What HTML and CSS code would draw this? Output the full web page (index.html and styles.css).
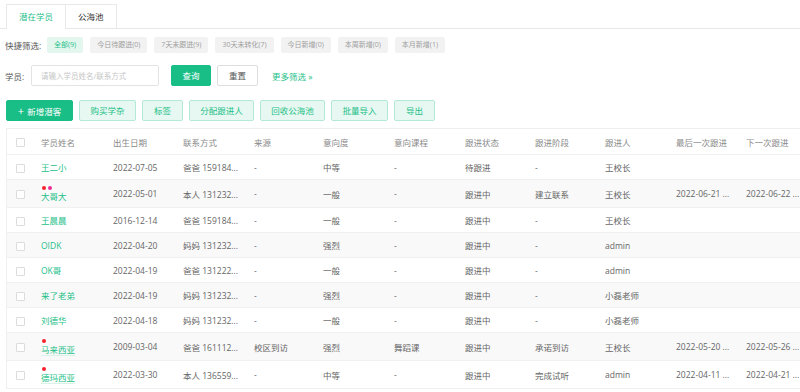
FILE: index.html
```html
<!DOCTYPE html>
<html>

<head>
  <meta charset="UTF-8">
  <meta name="viewport" content="width=device-width, initial-scale=1">
  <title>潜在学员</title>
  <link rel="stylesheet" href="styles.css">
</head>

<body>
  <div class="tabs">
    <div class="tab active">潜在学员</div>
    <div class="tab">公海池</div>
  </div>

  <div class="page">
    <div class="quick">
      <span class="label quick-label">快捷筛选:</span>
      <span class="chip on">全部(9)</span>
      <span class="chip">今日待跟进(0)</span>
      <span class="chip">7天未跟进(9)</span>
      <span class="chip">30天未转化(7)</span>
      <span class="chip">今日新增(0)</span>
      <span class="chip">本周新增(0)</span>
      <span class="chip">本月新增(1)</span>
    </div>

    <div class="search">
      <span class="label search-label">学员:</span>
      <input class="search-input" type="text" placeholder="请输入学员姓名/联系方式">
      <button class="btn primary query">查询</button>
      <button class="btn plain">重置</button>
      <span class="more">更多筛选 &raquo;</span>
    </div>

    <div class="actions">
      <button class="btn primary add"><span class="plus">+</span>新增潜客</button>
      <button class="btn light w4">购买学杂</button>
      <button class="btn light w2">标签</button>
      <button class="btn light w5">分配跟进人</button>
      <button class="btn light w5">回收公海池</button>
      <button class="btn light w4">批量导入</button>
      <button class="btn light w2">导出</button>
    </div>

    <div class="table-wrap">
      <table class="list">
        <colgroup>
          <col class="c-check">
          <col style="width:72px">
          <col style="width:70px">
          <col style="width:71px">
          <col style="width:69px">
          <col style="width:71px">
          <col style="width:71px">
          <col style="width:70px">
          <col style="width:70px">
          <col style="width:71px">
          <col style="width:70px">
          <col style="width:80px">
        </colgroup>
        <thead>
          <tr>
            <th><span class="check"></span></th>
            <th>学员姓名</th>
            <th>出生日期</th>
            <th>联系方式</th>
            <th>来源</th>
            <th>意向度</th>
            <th>意向课程</th>
            <th>跟进状态</th>
            <th>跟进阶段</th>
            <th>跟进人</th>
            <th>最后一次跟进</th>
            <th>下一次跟进</th>
          </tr>
        </thead>
        <tbody>
          <tr>
            <td><span class="check"></span></td>
            <td class="name">王二小</td>
            <td>2022-07-05</td>
            <td>爸爸 159184...</td>
            <td>-</td>
            <td>中等</td>
            <td>-</td>
            <td>待跟进</td>
            <td>-</td>
            <td>王校长</td>
            <td></td>
            <td></td>
          </tr>
          <tr class="tall">
            <td><span class="check"></span></td>
            <td class="name">
              <div class="dots"><i class="dot red"></i><i class="dot pink"></i></div>
              大哥大
            </td>
            <td>2022-05-01</td>
            <td>本人 131232...</td>
            <td>-</td>
            <td>一般</td>
            <td>-</td>
            <td>跟进中</td>
            <td>建立联系</td>
            <td>王校长</td>
            <td>2022-06-21 ...</td>
            <td>2022-06-22 ...</td>
          </tr>
          <tr>
            <td><span class="check"></span></td>
            <td class="name">王晨晨</td>
            <td>2016-12-14</td>
            <td>爸爸 159184...</td>
            <td>-</td>
            <td>一般</td>
            <td>-</td>
            <td>跟进中</td>
            <td>-</td>
            <td>王校长</td>
            <td></td>
            <td></td>
          </tr>
          <tr>
            <td><span class="check"></span></td>
            <td class="name">OIDK</td>
            <td>2022-04-20</td>
            <td>妈妈 131232...</td>
            <td>-</td>
            <td>强烈</td>
            <td>-</td>
            <td>跟进中</td>
            <td>-</td>
            <td>admin</td>
            <td></td>
            <td></td>
          </tr>
          <tr>
            <td><span class="check"></span></td>
            <td class="name">OK哥</td>
            <td>2022-04-19</td>
            <td>爸爸 131222...</td>
            <td>-</td>
            <td>一般</td>
            <td>-</td>
            <td>跟进中</td>
            <td>-</td>
            <td>admin</td>
            <td></td>
            <td></td>
          </tr>
          <tr>
            <td><span class="check"></span></td>
            <td class="name">来了老弟</td>
            <td>2022-04-19</td>
            <td>妈妈 131232...</td>
            <td>-</td>
            <td>强烈</td>
            <td>-</td>
            <td>跟进中</td>
            <td>-</td>
            <td>小磊老师</td>
            <td></td>
            <td></td>
          </tr>
          <tr>
            <td><span class="check"></span></td>
            <td class="name">刘德华</td>
            <td>2022-04-18</td>
            <td>妈妈 131232...</td>
            <td>-</td>
            <td>一般</td>
            <td>-</td>
            <td>跟进中</td>
            <td>-</td>
            <td>小磊老师</td>
            <td></td>
            <td></td>
          </tr>
          <tr class="tall">
            <td><span class="check"></span></td>
            <td class="name">
              <div class="dots"><i class="dot red"></i></div>
              <span class="line">马来西亚</span>
            </td>
            <td>2009-03-04</td>
            <td>爸爸 161112...</td>
            <td>校区到访</td>
            <td>强烈</td>
            <td>舞蹈课</td>
            <td>跟进中</td>
            <td>承诺到访</td>
            <td>王校长</td>
            <td>2022-05-20 ...</td>
            <td>2022-05-26 ...</td>
          </tr>
          <tr class="tall">
            <td><span class="check"></span></td>
            <td class="name">
              <div class="dots"><i class="dot red"></i></div>
              <span class="line">德玛西亚</span>
            </td>
            <td>2022-03-30</td>
            <td>本人 136559...</td>
            <td>-</td>
            <td>中等</td>
            <td>-</td>
            <td>跟进中</td>
            <td>完成试听</td>
            <td>admin</td>
            <td>2022-04-11 ...</td>
            <td>2022-04-21 ...</td>
          </tr>
        </tbody>
      </table>
    </div>
  </div>
</body>

</html>
```

FILE: styles.css
```css
body {
  margin: 0;
  background-color: #fff;
  font-family: "Open Sans", "Noto Sans CJK SC", sans-serif;
  font-size: 8.5px;
  color: #666;
  overflow: hidden;
}

/* tabs */
.tabs {
  display: flex;
  padding: 4px 0 0 6px;
  border-bottom: 1px solid #e8e8e8;
}
.tab {
  height: 23px;
  line-height: 23px;
  padding: 0 12px;
  border: 1px solid #e8e8e8;
  border-bottom: none;
  margin-bottom: -1px;
  background-color: #fff;
  font-size: 8.5px;
  color: #333;
}
.tab + .tab {
  border-left: none;
}
.tab.active {
  color: #1dbf88;
  height: 24px;
}

.page {
  padding-left: 6px;
}

.label {
  color: #555;
  font-size: 8.5px;
  white-space: nowrap;
}

/* quick filter */
.quick {
  display: flex;
  align-items: center;
  margin-top: 8px;
  margin-left: -1px;
}
.quick-label {
  width: 42px;
  flex: none;
}
.chip {
  height: 16px;
  line-height: 16px;
  padding: 0 7px;
  margin-right: 7px;
  border-radius: 2px;
  background-color: #f2f2f2;
  color: #a0a0a0;
  font-size: 7px;
  white-space: nowrap;
}
.chip.on {
  background-color: #e4f7ef;
  color: #1dbf88;
}

/* search */
.search {
  display: flex;
  align-items: center;
  margin-top: 12px;
  margin-left: -1px;
}
.search-label {
  width: 26px;
  flex: none;
}
.search-input {
  box-sizing: border-box;
  width: 128px;
  height: 21px;
  padding: 0 0 0 9px;
  border: 1px solid #e3e3e3;
  border-radius: 2px;
  font-family: inherit;
  font-size: 7.5px;
  outline: none;
}
.search-input::placeholder {
  color: #c6c6c6;
}

.btn {
  box-sizing: border-box;
  height: 21px;
  padding: 0;
  border: 1px solid transparent;
  border-radius: 2px;
  font-family: inherit;
  font-size: 8.5px;
  line-height: 19px;
  text-align: center;
  white-space: nowrap;
}
.btn.primary {
  background-color: #19bd86;
  border-color: #19bd86;
  color: #fff;
}
.btn.plain {
  background-color: #fff;
  border-color: #dedede;
  color: #555;
}
.btn.light {
  background-color: #e6f8f1;
  border-color: #b4ead5;
  color: #1dbf88;
}
.query {
  width: 40px;
  margin: 0 6px 0 12px;
}
.search .plain {
  width: 41px;
}
.more {
  margin-left: 14px;
  color: #1dbf88;
  font-size: 8.5px;
}

/* action buttons */
.actions {
  display: flex;
  gap: 6px;
  margin-top: 14px;
}
.add {
  width: 67px;
}
.plus {
  font-size: 11px;
  margin-right: 3px;
}
.w2 {
  width: 41px;
}
.w4 {
  width: 57px;
}
.w5 {
  width: 65px;
}

/* table */
.table-wrap {
  margin-top: 7px;
  overflow: hidden;
  border-left: 1px solid #f0f0f0;
  border-top: 1px solid #eeeeee;
}
.list {
  table-layout: fixed;
  width: 819px;
  border-collapse: collapse;
}
.c-check {
  width: 34px;
}
.list th,
.list td {
  height: 24px;
  padding: 0;
  text-align: left;
  white-space: nowrap;
  overflow: hidden;
  border-bottom: 1px solid #f0f0f0;
  font-weight: normal;
  font-size: 8.5px;
}
.list th {
  color: #8a8a8a;
  height: 25px;
}
.list td {
  color: #666;
}
.list tbody tr:nth-child(even) td {
  background-color: #f9f9f9;
}
.list tr.tall td {
  height: 27px;
}
.list th:first-child,
.list td:first-child {
  padding-left: 9px;
}
.check {
  display: inline-block;
  box-sizing: border-box;
  width: 9px;
  height: 9px;
  border: 1px solid #dcdcdc;
  border-radius: 1px;
  background-color: #fff;
  vertical-align: middle;
}
.list td.name {
  color: #1dbf88;
  line-height: 11px;
}
.dots {
  display: flex;
  gap: 2px;
  height: 4px;
  margin: 1px 0 1px 1px;
}
.dot {
  width: 4px;
  height: 4px;
  border-radius: 50%;
}
.dot.red {
  background-color: #f5222d;
}
.dot.pink {
  background-color: #eb2f96;
}
.line {
  border-bottom: 1px solid #d8f2e8;
}
```
